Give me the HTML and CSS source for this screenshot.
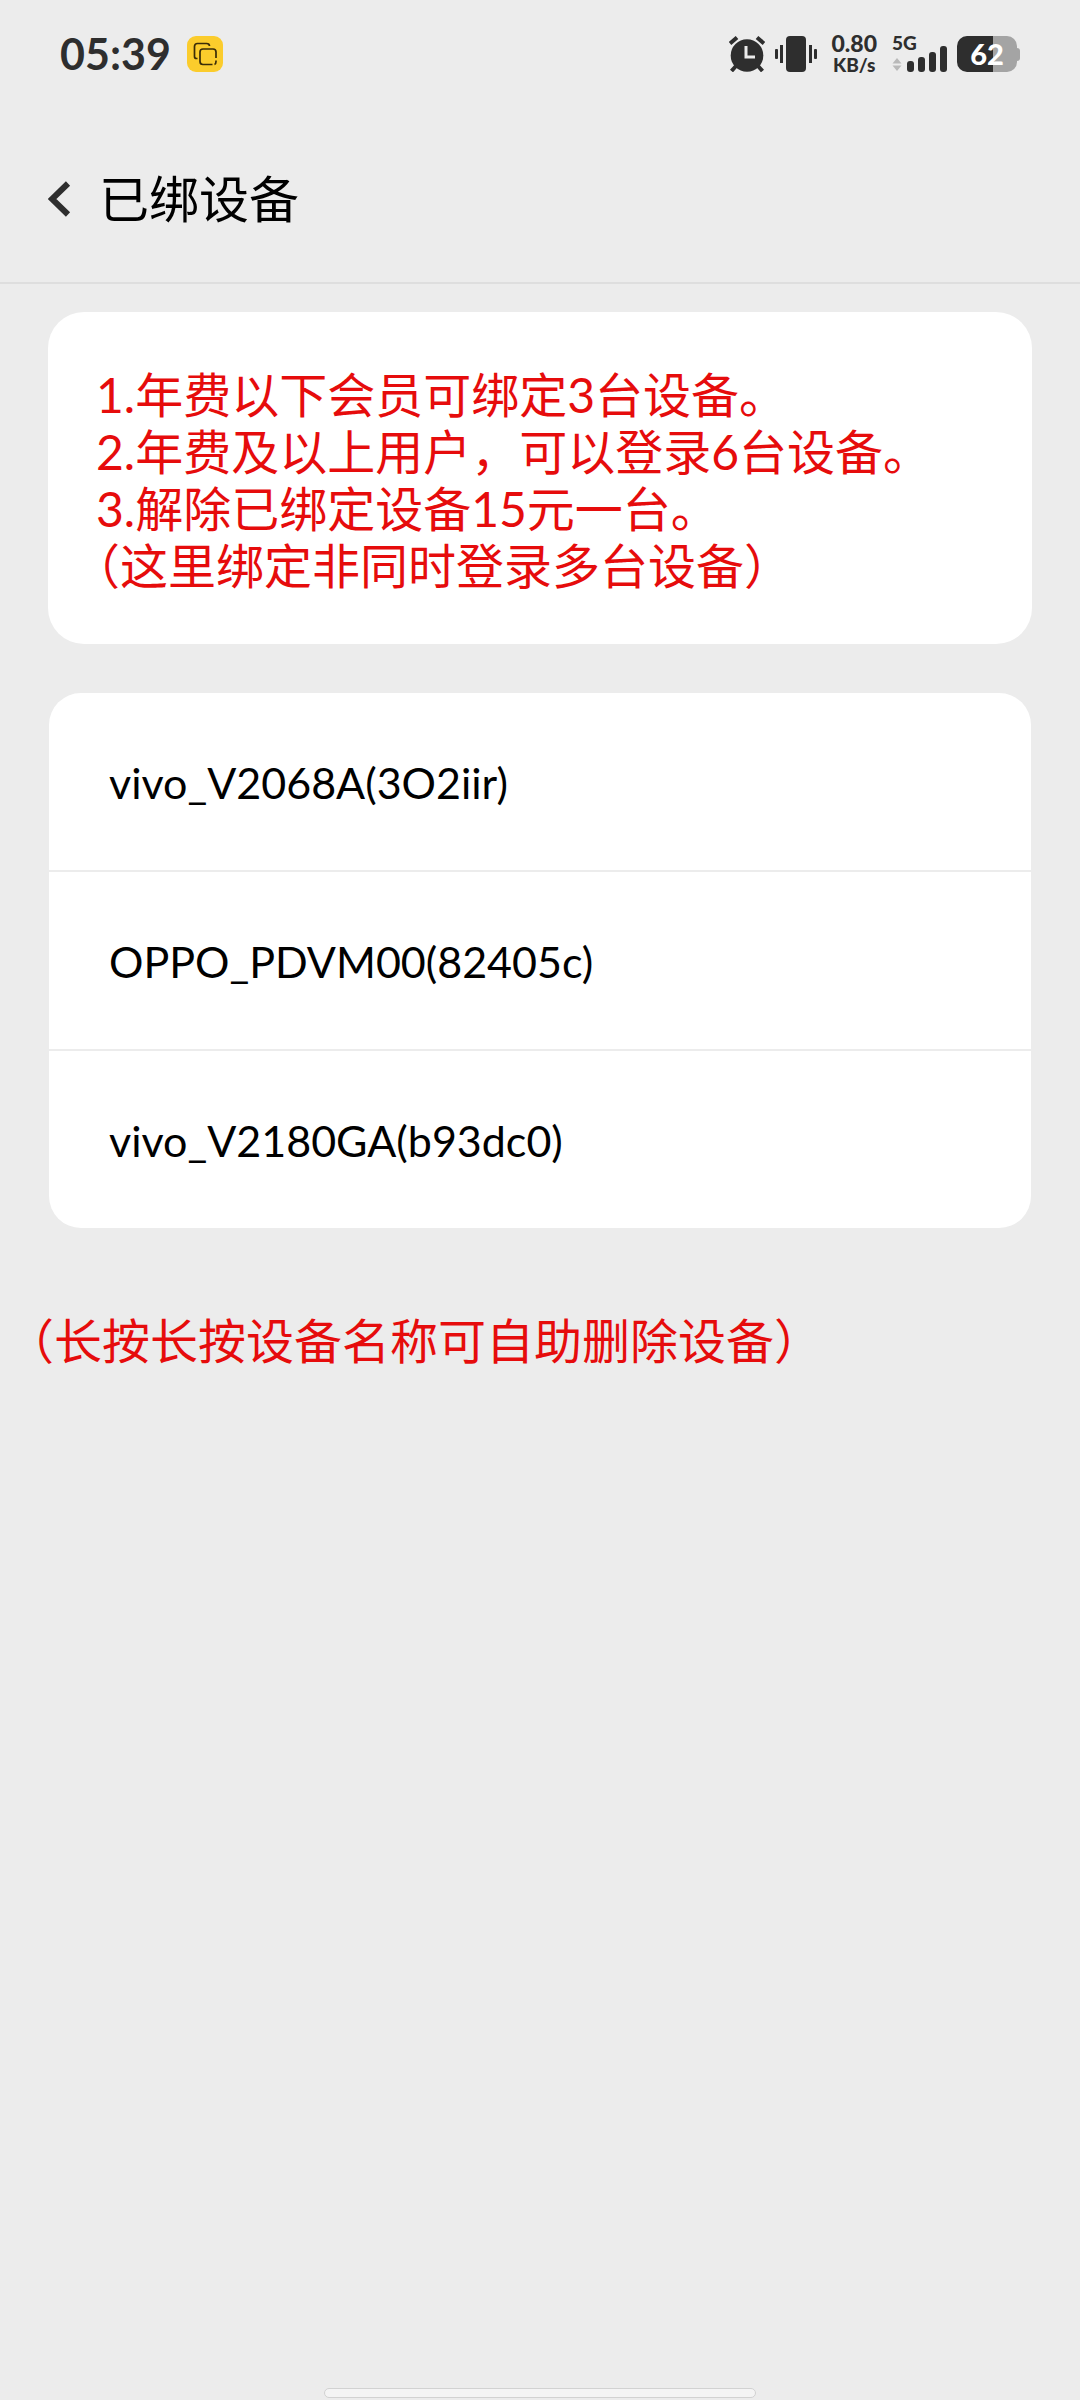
FILE: index.html
```html
<!DOCTYPE html>
<html lang="zh-CN">
<head>
<meta charset="utf-8">
<meta name="viewport" content="width=device-width, initial-scale=1">
<title>已绑设备</title>
<link rel="stylesheet" href="styles.css">
</head>
<body>
<div class="status-bar">
  <span class="clock">05:39</span>
  <svg class="app-badge" width="36" height="36" viewBox="0 0 36 36" aria-hidden="true">
    <rect width="36" height="36" rx="9" fill="#fbcc2c"/>
    <path d="M10.500 22.500H9.500Q7.500 22.500 7.500 20.500V10.500Q7.500 7.500 10.500 7.500H19.500Q22.500 7.500 22.500 10" fill="none" stroke="#3a2c08" stroke-width="1.700"/>
    <path d="M29 22V16Q29 13 26 13H16Q13 13 13 16V25.500Q13 28.500 16 28.500H25.500M27.500 28.500Q29 28 29 25.500V24.500" fill="none" stroke="#3a2c08" stroke-width="1.700"/>
  </svg>
  <div class="status-icons">
    <svg width="36" height="36" viewBox="0 0 36 36" fill="none" stroke="#2e2e2e" aria-hidden="true">
      <circle cx="18" cy="19.500" r="16.300" fill="#2e2e2e" stroke="none"/>
      <path d="M1 7.500L8 1.500M28 1.500L35 7.500" stroke-width="4"/>
      <path d="M7 30L2.500 35M29 30L33.500 35" stroke-width="4"/>
      <path d="M17 10V21H26" stroke="#ececec" stroke-width="3"/>
    </svg>
    <svg width="42" height="36" viewBox="0 0 42 36" fill="#2e2e2e" aria-hidden="true">
      <rect x="11" width="20" height="36" rx="4"/>
      <rect x="5" y="9" width="3" height="18"/><rect y="13" width="3" height="10" rx="1"/>
      <rect x="34" y="9" width="3" height="18"/><rect x="39" y="13" width="3" height="10" rx="1"/>
    </svg>
    <div class="net-speed"><span class="net-value">0.80</span><span class="net-unit">KB/s</span></div>
    <div class="signal">
      <span class="net-type">5G</span>
      <svg width="55" height="26" viewBox="0 0 55 26" fill="#2e2e2e" aria-hidden="true">
        <path d="M5 12L9.500 17.500H0.500ZM5 25L9.500 19.500H0.500Z" fill="#b9b9b9"/>
        <rect x="15" y="15" width="7" height="11" rx="3"/>
        <rect x="26" y="11" width="7" height="15" rx="3"/>
        <rect x="37" y="6" width="7" height="20" rx="3"/>
        <rect x="48" width="7" height="26" rx="3"/>
      </svg>
    </div>
    <div class="battery"><span class="battery-level">62</span><span class="battery-tip"></span></div>
  </div>
</div>
<header class="header">
  <button class="back" type="button" aria-label="返回">
    <svg width="24" height="36" viewBox="0 0 24 36" aria-hidden="true"><path d="M20 2.500L4 18L20 33.500" fill="none" stroke="#2e2e2e" stroke-width="6"/></svg>
  </button>
  <h1 class="title">已绑设备</h1>
</header>
<main class="content">
  <section class="notice">
    <p>1.年费以下会员可绑定3台设备。</p>
    <p>2.年费及以上用户，可以登录6台设备。</p>
    <p>3.解除已绑定设备15元一台。</p>
    <p class="aside">（这里绑定非同时登录多台设备）</p>
  </section>
  <ul class="devices">
    <li class="device">vivo_V2068A(3O2iir)</li>
    <li class="device">OPPO_PDVM00(82405c)</li>
    <li class="device">vivo_V2180GA(b93dc0)</li>
  </ul>
  <p class="hint aside">（长按长按设备名称可自助删除设备）</p>
</main>
<div class="home-indicator"></div>
</body>
</html>
```
FILE: styles.css
```css
* { box-sizing: border-box; }
body {
  margin: 0;
  min-height: 100vh;
  display: flex;
  flex-direction: column;
  background: #ececec;
  color: #000;
  font-family: Lato, "Noto Sans CJK SC", sans-serif;
}
h1, p, ul { margin: 0; padding: 0; }
svg { display: block; flex: none; }

.status-bar {
  display: flex;
  align-items: center;
  height: 108px;
  padding: 0 60px;
  color: #2e2e2e;
}
.clock { font-size: 43px; font-weight: 700; line-height: 48px; }
.app-badge { margin-left: 16px; }
.status-icons {
  display: flex;
  align-items: center;
  gap: 10px;
  margin-left: auto;
}
.net-speed {
  display: flex;
  flex-direction: column;
  align-items: center;
  margin-left: 5px;
  font-weight: 900;
  line-height: 21px;
}
.net-value { font-size: 23px; }
.net-unit { font-size: 19px; }
.signal { display: flex; flex-direction: column; margin-left: 5px; }
.net-type { height: 10px; font-size: 19px; font-weight: 900; line-height: 14px; }
.battery { display: flex; align-items: center; }
.battery-level {
  width: 60px;
  height: 36px;
  border-radius: 10px;
  background: linear-gradient(90deg, #2e2e2e 60%, #a4a4a4 60%);
  color: #fff;
  font-size: 29px;
  font-weight: 900;
  line-height: 36px;
  text-align: center;
}
.battery-tip { width: 3px; height: 13px; border-radius: 0 3px 3px 0; background: #a4a4a4; }

.header {
  display: flex;
  align-items: center;
  height: 176px;
  padding: 8px 48px 0;
  border-bottom: 2px solid #dedede;
}
.back { padding: 0; border: 0; background: none; }
.title { margin-left: 27px; font-size: 50px; font-weight: 400; line-height: 60px; }

.content { flex: 1; padding-top: 28px; }
.notice {
  margin: 0 48px;
  padding: 54px 48px 50px;
  border-radius: 36px;
  background: #fff;
}
.notice, .hint {
  color: #e60c0c;
  font-size: 48px;
  line-height: 57px;
}
/* Half-width brackets, so the line starts flush with the ones above. */
.aside { font-feature-settings: "halt"; }
.devices {
  margin: 49px 49px 0;
  border-radius: 32px;
  background: #fff;
  list-style: none;
}
.device {
  padding: 61px 60px 59px;
  font-size: 43px;
  line-height: 57px;
}
.device + .device { border-top: 2px solid #ececec; }
.hint { margin: 84px 30px 0; }

.home-indicator {
  width: 40%;
  height: 10px;
  margin: 0 auto 2px;
  border: 1px solid #d2d2d2;
  border-radius: 5px;
  background: #f4f4f4;
}
```
